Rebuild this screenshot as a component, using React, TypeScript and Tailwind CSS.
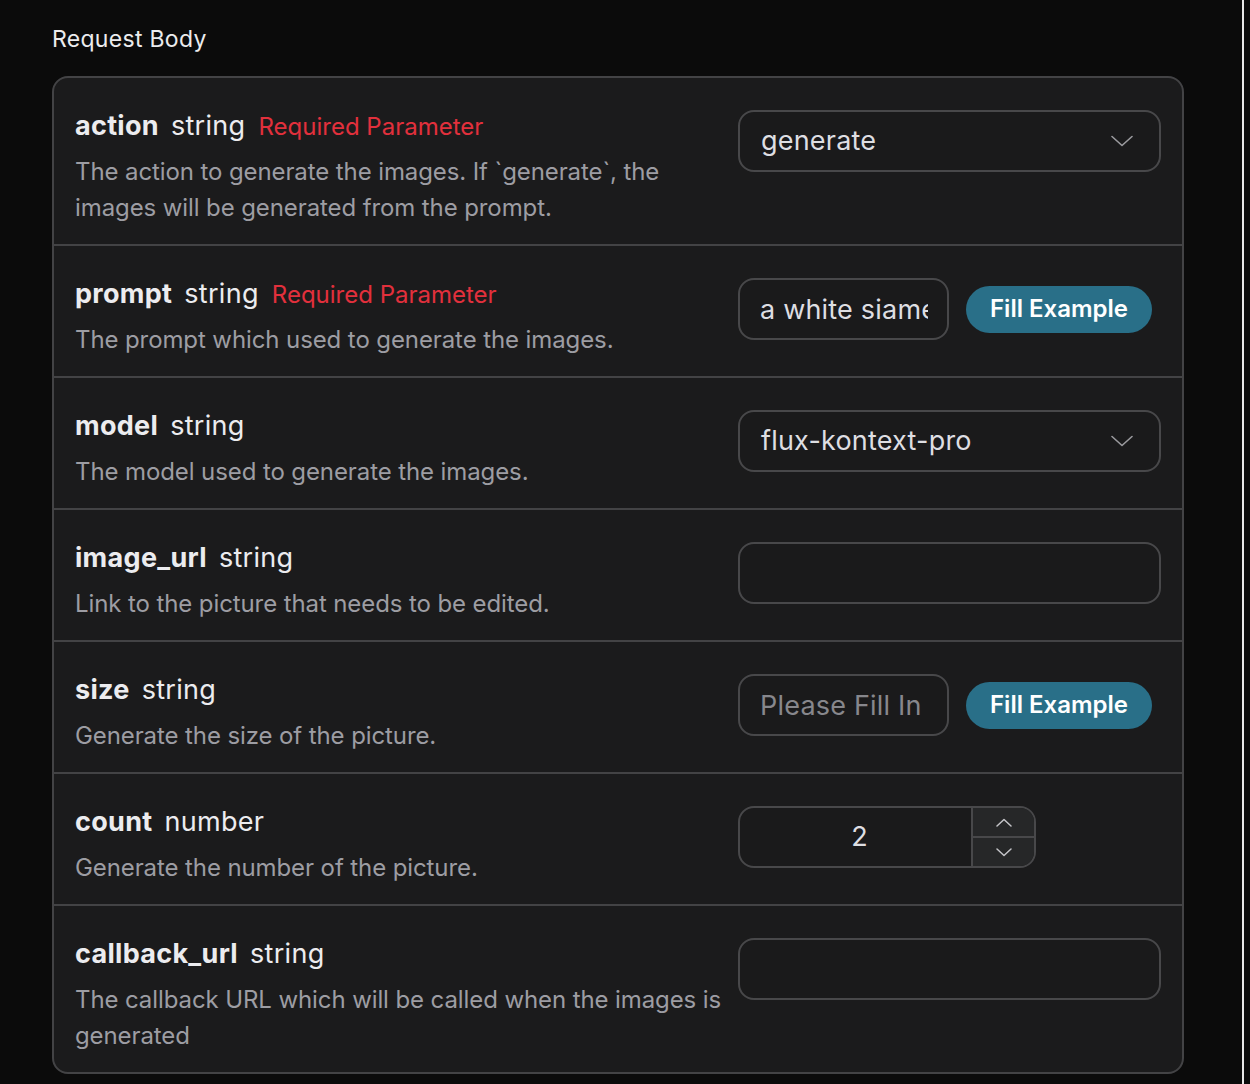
import React from "react";

const font = { fontFamily: "Inter, 'Noto Sans', sans-serif" };

function Chevron({ className = "" }: { className?: string }) {
  return (
    <svg width="22" height="12" viewBox="0 0 22 12" fill="none" className={className}>
      <path d="M1 1.5 L11 10.5 L21 1.5" stroke="#9a9a9e" strokeWidth="1.6" strokeLinecap="round" strokeLinejoin="round" />
    </svg>
  );
}

function SmallChevron({ up }: { up?: boolean }) {
  return (
    <svg width="16" height="9" viewBox="0 0 16 9" fill="none">
      <path
        d={up ? "M1 8 L8 1.5 L15 8" : "M1 1 L8 7.5 L15 1"}
        stroke="#c4c4c8"
        strokeWidth="1.5"
        strokeLinecap="round"
        strokeLinejoin="round"
      />
    </svg>
  );
}

function Select({ value }: { value: string }) {
  return (
    <div className="flex h-[62px] w-[423px] items-center justify-between rounded-[16px] border-2 border-[#48484a] bg-[#1a1a1b] pl-[21px] pr-[26px]">
      <span className="text-[27px] tracking-[0.2px] text-[#dedee2]">{value}</span>
      <Chevron />
    </div>
  );
}

function TextInput({ value, placeholder }: { value?: string; placeholder?: string }) {
  return (
    <input
      readOnly
      value={value ?? ""}
      placeholder={placeholder}
      style={font}
      className="h-[62px] w-[211px] rounded-[16px] border-2 border-[#48484a] bg-[#1a1a1b] pl-[20px] pr-[19px] text-[27px] tracking-[0.2px] text-[#dedee2] outline-none placeholder:text-[#87878c]"
    />
  );
}

function FillButton() {
  return (
    <button className="ml-[17px] flex h-[47px] w-[186px] shrink-0 items-center justify-center rounded-full bg-[#296f88] text-[24px] font-semibold text-white">
      Fill Example
    </button>
  );
}

function EmptyInput() {
  return <div className="h-[62px] w-[423px] rounded-[16px] border-2 border-[#48484a] bg-[#1a1a1b]" />;
}

function NumberInput() {
  return (
    <div className="flex h-[62px] w-[298px] overflow-hidden rounded-[16px] border-2 border-[#48484a] bg-[#1a1a1b]">
      <div className="flex flex-1 items-center justify-center pl-[8px] text-[27px] text-[#dedee2]">2</div>
      <div className="flex w-[63px] flex-col border-l-2 border-[#48484a] bg-[#262728]">
        <div className="flex flex-1 items-center justify-center border-b-2 border-[#48484a]">
          <SmallChevron up />
        </div>
        <div className="flex flex-1 items-center justify-center">
          <SmallChevron />
        </div>
      </div>
    </div>
  );
}

type Row = {
  name: string;
  type: string;
  required?: boolean;
  desc: string;
  control: React.ReactNode;
};

const rows: Row[] = [
  {
    name: "action",
    type: "string",
    required: true,
    desc: "The action to generate the images. If `generate`, the images will be generated from the prompt.",
    control: <Select value="generate" />,
  },
  {
    name: "prompt",
    type: "string",
    required: true,
    desc: "The prompt which used to generate the images.",
    control: (
      <div className="flex items-center">
        <TextInput value="a white siamese cat" />
        <FillButton />
      </div>
    ),
  },
  {
    name: "model",
    type: "string",
    desc: "The model used to generate the images.",
    control: <Select value="flux-kontext-pro" />,
  },
  {
    name: "image_url",
    type: "string",
    desc: "Link to the picture that needs to be edited.",
    control: <EmptyInput />,
  },
  {
    name: "size",
    type: "string",
    desc: "Generate the size of the picture.",
    control: (
      <div className="flex items-center">
        <TextInput placeholder="Please Fill In" />
        <FillButton />
      </div>
    ),
  },
  {
    name: "count",
    type: "number",
    desc: "Generate the number of the picture.",
    control: <NumberInput />,
  },
  {
    name: "callback_url",
    type: "string",
    desc: "The callback URL which will be called when the images is generated",
    control: <EmptyInput />,
  },
];

export default function App() {
  return (
    <div className="flex min-h-[1084px] w-[1250px] bg-[#0b0b0b]" style={font}>
      <div className="w-[1242px] pl-[52px] pr-[58px] pt-[23px]">
        <div className="h-[32px] text-[23px] leading-[32px] tracking-[0.3px] text-[#ececee]">Request Body</div>
        <div className="mt-[21px] overflow-hidden rounded-[16px] border-2 border-[#434345] bg-[#1b1b1c]">
          {rows.map((r, i) => (
            <div
              key={r.name}
              className={"flex pl-[21px] pr-[21px] pt-[30px] pb-[18px] " + (i > 0 ? "border-t-2 border-[#434345]" : "")}
            >
              <div className="min-w-0 flex-1 pr-[10px]">
                <div className="flex h-[36px] items-baseline leading-[36px]">
                  <span className="text-[27px] font-bold tracking-[0.3px] text-[#ececef]">{r.name}</span>
                  <span className="ml-[12px] text-[27px] tracking-[0.3px] text-[#ececef]">{r.type}</span>
                  {r.required && <span className="ml-[13px] text-[24px] text-[#e2303c]">Required Parameter</span>}
                </div>
                <div className="mt-[10px] text-[24px] leading-[36px] tracking-[-0.1px] text-[#9d9da3]">{r.desc}</div>
              </div>
              <div className="mt-[2px] w-[423px] shrink-0">{r.control}</div>
            </div>
          ))}
        </div>
      </div>
      <div className="w-[2px] bg-[#e8e8e8]" />
      <div className="flex-1 bg-[#0b0b0b]" />
    </div>
  );
}
